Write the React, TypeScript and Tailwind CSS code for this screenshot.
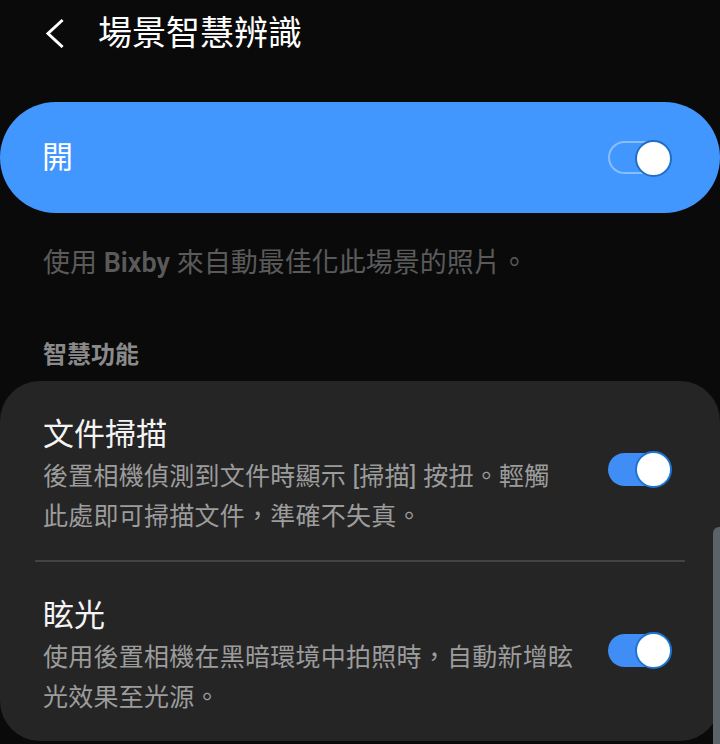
import React from "react";

const FONT = {
  fontFamily: 'Roboto, "Noto Sans CJK TC", "Noto Sans", sans-serif',
};

function MasterToggle() {
  return (
    <div className="relative w-[64px] h-[36px] flex items-center">
      <div className="w-[56px] h-[33px] rounded-full border-2 border-[rgba(255,255,255,0.38)]" />
      <div className="absolute left-[27px] top-0 w-[37px] h-[37px] rounded-full bg-white border-[2px] border-[#1f6fc4]" />
    </div>
  );
}

function CardToggle() {
  return (
    <div className="relative w-[64px] h-[36px] flex items-center">
      <div className="w-[56px] h-[33px] rounded-full bg-[#3f8df5]" />
      <div className="absolute left-[27px] top-0 w-[37px] h-[37px] rounded-full bg-white border-[2px] border-[#1b74d6]" />
    </div>
  );
}

function Row({ title, lines }: { title: string; lines: string[] }) {
  return (
    <div className="flex items-center pl-[43px] pr-[48px] pt-[34px] pb-[23px]">
      <div className="flex-1">
        <div className="text-[31px] leading-[40px] text-[#f4f4f4]">{title}</div>
        <div className="mt-[2px] text-[25px] leading-[40px] tracking-[0.25px] text-[#9c9c9c] whitespace-nowrap">
          {lines.map((l, i) => (
            <div key={i}>{l}</div>
          ))}
        </div>
      </div>
      <div className="mb-[14px]">
        <CardToggle />
      </div>
    </div>
  );
}

export default function App() {
  return (
    <div
      className="relative w-[720px] h-[744px] bg-[#0a0a0a] overflow-hidden"
      style={FONT}
    >
      {/* Header */}
      <div className="h-[66px] flex items-center pl-[44px]">
        <svg width="22" height="30" viewBox="0 0 22 30" className="shrink-0">
          <path
            d="M17.5 3 L4 15.5 L17.5 28"
            fill="none"
            stroke="#ffffff"
            strokeWidth="3"
            strokeLinecap="square"
            strokeLinejoin="miter"
          />
        </svg>
        <div className="ml-[32px] text-[34px] leading-[40px] text-white">
          場景智慧辨識
        </div>
      </div>

      {/* Master switch */}
      <div className="mt-[36px] h-[111px] rounded-full bg-[#4297fe] flex items-center justify-between pl-[42px] pr-[48px]">
        <div className="text-[31px] leading-[40px] text-white">開</div>
        <MasterToggle />
      </div>

      <div className="mt-[32px] pl-[43px] text-[27px] leading-[36px] text-[#5a5a5a] whitespace-nowrap">
        使用 <span className="font-semibold">Bixby</span> 來自動最佳化此場景的照片。
      </div>

      <div className="mt-[58px] pl-[43px] text-[24px] leading-[32px] font-bold text-[#8a8a8a]">
        智慧功能
      </div>

      {/* Card */}
      <div className="mt-[10px] rounded-[40px] bg-[#252525]">
        <Row
          title="文件掃描"
          lines={["後置相機偵測到文件時顯示 [掃描] 按扭。輕觸", "此處即可掃描文件，準確不失真。"]}
        />
        <div className="mx-[35px] h-[2px] bg-[#434343]" />
        <Row
          title="眩光"
          lines={["使用後置相機在黑暗環境中拍照時，自動新增眩", "光效果至光源。"]}
        />
      </div>

      {/* Scrollbar overlay */}
      <div className="absolute right-0 top-[527px] w-[7px] h-[217px] rounded-tl-[6px] bg-[#5b6268]" />
    </div>
  );
}
